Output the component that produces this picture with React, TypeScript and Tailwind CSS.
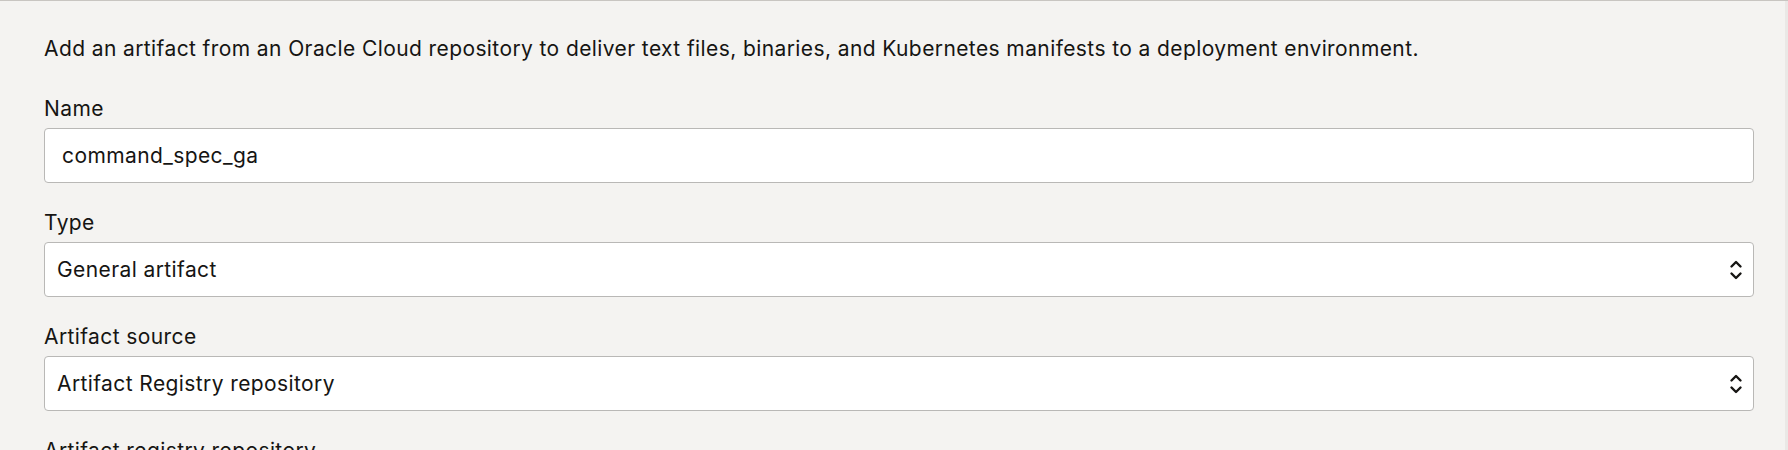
import React from "react";

function Chevrons() {
  return (
    <svg width="14" height="22" viewBox="0 0 14 22" fill="none" stroke="#161513" strokeWidth="2.4" strokeLinecap="round" strokeLinejoin="round">
      <path d="M2.5 7.5 L7 3 L11.5 7.5" />
      <path d="M2.5 14.5 L7 19 L11.5 14.5" />
    </svg>
  );
}

function Field({ label, children }: { label: string; children: React.ReactNode }) {
  return (
    <div className="flex flex-col">
      <div className="text-[21px] leading-[28px] tracking-[0.4px] text-[#161513] mb-[5px]">{label}</div>
      {children}
    </div>
  );
}

function Select({ value }: { value: string }) {
  return (
    <div className="h-[55px] rounded-[4px] border border-[#b9b8b6] bg-white flex items-center pl-[12px] pr-[10px]">
      <span className="flex-1 text-[21px] tracking-[0.4px] text-[#161513]">{value}</span>
      <Chevrons />
    </div>
  );
}

export default function App() {
  return (
    <div
      className="w-full h-[450px] overflow-hidden bg-[#f4f3f1] border-t border-[#c8c5c1] flex"
      style={{ fontFamily: "Inter, 'Noto Sans', sans-serif" }}
    >
      <div className="flex-1 pl-[44px] pr-[31px] pt-[34px] flex flex-col">
        <p className="text-[21px] leading-[28px] tracking-[0.4px] text-[#161513] whitespace-nowrap">
          Add an artifact from an Oracle Cloud repository to deliver text files, binaries, and Kubernetes manifests to a deployment environment.
        </p>
        <div className="mt-[32px] flex flex-col gap-[26px]">
          <Field label="Name">
            <div className="h-[55px] rounded-[4px] border border-[#b9b8b6] bg-white flex items-center pl-[17px]">
              <span className="text-[21px] tracking-[0.4px] text-[#161513]">command_spec_ga</span>
            </div>
          </Field>
          <Field label="Type">
            <Select value="General artifact" />
          </Field>
          <Field label="Artifact source">
            <Select value="Artifact Registry repository" />
          </Field>
          <Field label="Artifact registry repository">
            <Select value="" />
          </Field>
        </div>
      </div>
      <div className="w-[3px] bg-[#eae8e6]" />
    </div>
  );
}
